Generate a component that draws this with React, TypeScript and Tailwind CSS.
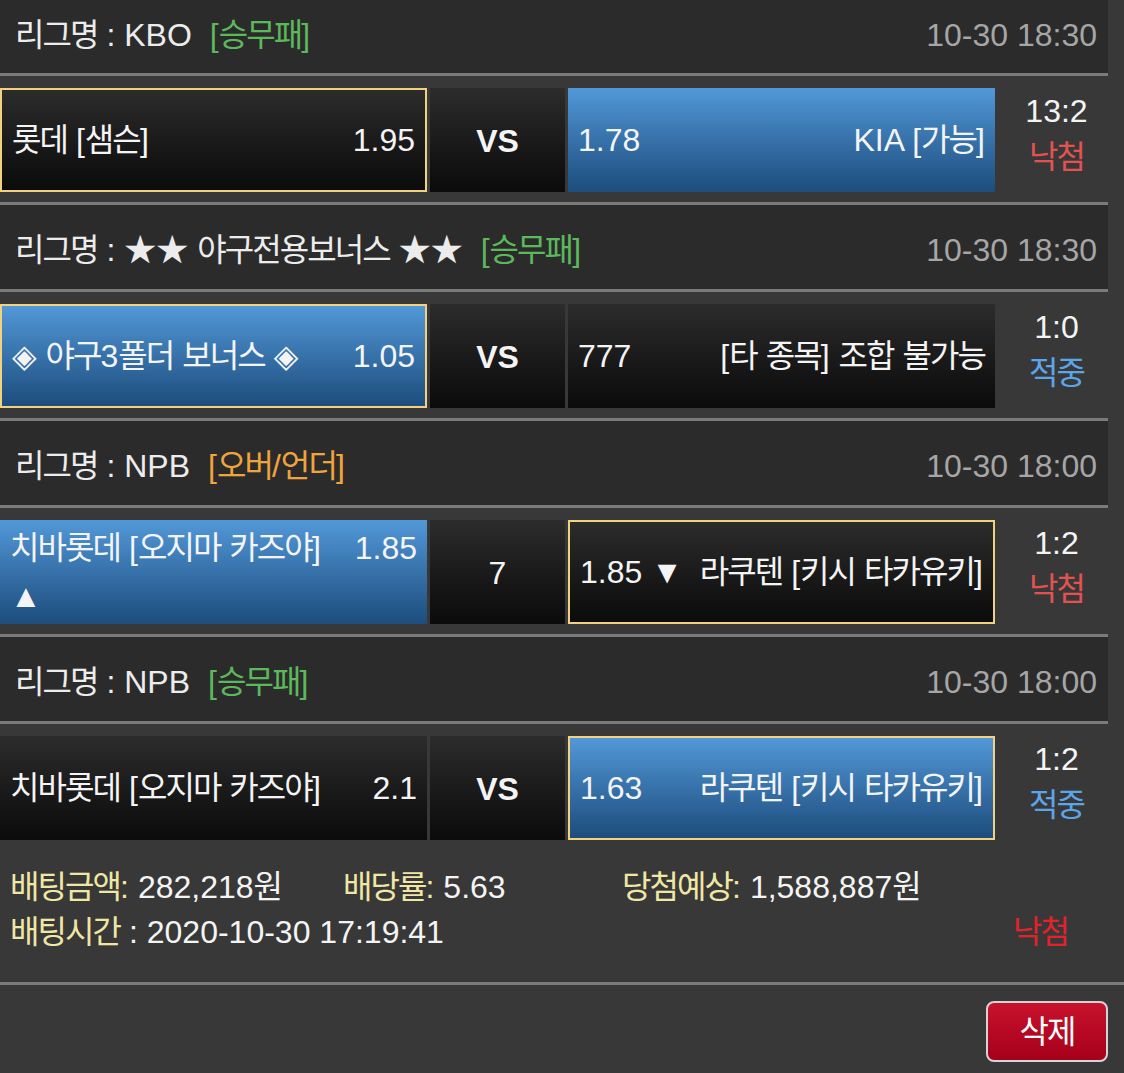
import React from 'react';

// Hangul in the reference is a bit narrower than Noto CJK, so tighten it slightly
const ko = (s: string) =>
  s.split(/([\uac00-\ud7a3]+)/).map((p, i) =>
    /[\uac00-\ud7a3]/.test(p) ? (
      <span key={i} className="tracking-[-0.06em]">
        {p}
      </span>
    ) : (
      p
    )
  );

type Cell = {
  left: string;
  right: string;
  blue?: boolean;
  picked?: boolean;
  below?: string;
};

type Section = {
  league: string;
  type: string;
  typeClass: string;
  time: string;
  home: Cell;
  center: string;
  bold: boolean;
  away: Cell;
  score: string;
  result: '낙첨' | '적중';
};

const SECTIONS: Section[] = [
  {
    league: 'KBO',
    type: '승무패',
    typeClass: 'text-[#5bb85b]',
    time: '10-30 18:30',
    home: { left: '롯데 [샘슨]', right: '1.95', picked: true },
    center: 'VS',
    bold: true,
    away: { left: '1.78', right: 'KIA [가능]', blue: true },
    score: '13:2',
    result: '낙첨',
  },
  {
    league: '★★ 야구전용보너스 ★★',
    type: '승무패',
    typeClass: 'text-[#5bb85b]',
    time: '10-30 18:30',
    home: { left: '◈ 야구3폴더 보너스 ◈', right: '1.05', blue: true, picked: true },
    center: 'VS',
    bold: true,
    away: { left: '777', right: '[타 종목] 조합 불가능' },
    score: '1:0',
    result: '적중',
  },
  {
    league: 'NPB',
    type: '오버/언더',
    typeClass: 'text-[#f0a43c]',
    time: '10-30 18:00',
    home: { left: '치바롯데 [오지마 카즈야]', right: '1.85', blue: true, below: '▲' },
    center: '7',
    bold: false,
    away: { left: '1.85 ▼', right: '라쿠텐 [키시 타카유키]', picked: true },
    score: '1:2',
    result: '낙첨',
  },
  {
    league: 'NPB',
    type: '승무패',
    typeClass: 'text-[#5bb85b]',
    time: '10-30 18:00',
    home: { left: '치바롯데 [오지마 카즈야]', right: '2.1' },
    center: 'VS',
    bold: true,
    away: { left: '1.63', right: '라쿠텐 [키시 타카유키]', blue: true, picked: true },
    score: '1:2',
    result: '적중',
  },
];

const Box: React.FC<{ cell: Cell; width: string }> = ({ cell, width }) => (
  <div
    className={`${width} h-[104px] flex flex-col justify-center px-[10px] whitespace-nowrap ${
      cell.blue
        ? 'bg-linear-to-b from-[#5298d8] to-[#1d4d7d]'
        : 'bg-linear-to-b from-[#2c2c2c] to-[#0b0b0b]'
    } ${cell.picked ? 'border-2 border-[#f2d27e]' : ''}`}
  >
    <div className="flex items-center justify-between gap-2 leading-[48px]">
      <span>{ko(cell.left)}</span>
      <span>{ko(cell.right)}</span>
    </div>
    {cell.below && <div className="leading-[48px] text-[32px]">{cell.below}</div>}
  </div>
);

const Line = () => <div className="w-[1108px] h-[3px] bg-[#7b7b7b]" />;

const MatchSection: React.FC<{ s: Section; last: boolean; first: boolean }> = ({ s, last, first }) => (
  <div>
    <div
      className={`w-[1108px] h-[84px] bg-[#2b2b2b] flex items-center justify-between pl-[15px] pr-[11px] ${
        first ? 'pt-[7px]' : 'pt-[5px]'
      }`}
    >
      <div className="text-[#ececec] whitespace-nowrap">
        {ko('리그명')} : {ko(s.league)}
        <span className={`ml-[18px] ${s.typeClass}`}>[{ko(s.type)}]</span>
      </div>
      <div className="text-[#a6a6a6]">{s.time}</div>
    </div>
    <Line />
    <div className="flex h-[126px] pt-[12px] pb-[10px]">
      <Box cell={s.home} width="w-[427px]" />
      <div
        className={`ml-[3px] w-[135px] h-[104px] flex items-center justify-center pt-[2px] bg-linear-to-b from-[#2c2c2c] to-[#0b0b0b] ${
          s.bold ? 'font-bold' : ''
        }`}
      >
        {s.center}
      </div>
      <div className="ml-[3px]">
        <Box cell={s.away} width="w-[427px]" />
      </div>
      <div className="flex-1 h-[104px] flex flex-col items-center justify-center pb-[12px] pr-[6px] leading-[46px]">
        <div>{s.score}</div>
        <div className={s.result === '낙첨' ? 'text-[#e35252]' : 'text-[#5ca6e8]'}>{ko(s.result)}</div>
      </div>
    </div>
    {!last && <Line />}
  </div>
);

export default function App() {
  return (
    <div className="min-h-screen overflow-hidden bg-[#383838] text-[32px] text-[#f4f4f4] font-['Liberation_Sans','Noto_Sans_CJK_KR','DejaVu_Sans',sans-serif]">
      <div className="-mt-[11px]">
        {SECTIONS.map((s, i) => (
          <MatchSection key={i} s={s} first={i === 0} last={i === SECTIONS.length - 1} />
        ))}
      </div>

      {/* bet summary */}
      <div className="px-[10px] pt-[15px] pb-[27px] leading-[45px] whitespace-nowrap">
        <div className="flex">
          <div className="w-[333px]">
            <span className="text-[#f0e7a4]">{ko('배팅금액')}:</span> 282,218{ko('원')}
          </div>
          <div className="w-[279px]">
            <span className="text-[#f0e7a4]">{ko('배당률')}:</span> 5.63
          </div>
          <div>
            <span className="text-[#f0e7a4]">{ko('당첨예상')}:</span> 1,588,887{ko('원')}
          </div>
        </div>
        <div className="flex justify-between">
          <div>
            <span className="text-[#f0e7a4]">{ko('배팅시간')}</span> : 2020-10-30 17:19:41
          </div>
          <div className="mr-[46px] text-[#e4222c]">{ko('낙첨')}</div>
        </div>
      </div>
      <div className="h-[3px] bg-[#7b7b7b]" />
      <div className="flex justify-end pt-[16px] pr-[16px]">
        <button className="w-[122px] h-[61px] rounded-[8px] border-2 border-[#d4d4d4] bg-linear-to-b from-[#c8122c] to-[#a6001b] text-white leading-none">
          {ko('삭제')}
        </button>
      </div>
    </div>
  );
}
